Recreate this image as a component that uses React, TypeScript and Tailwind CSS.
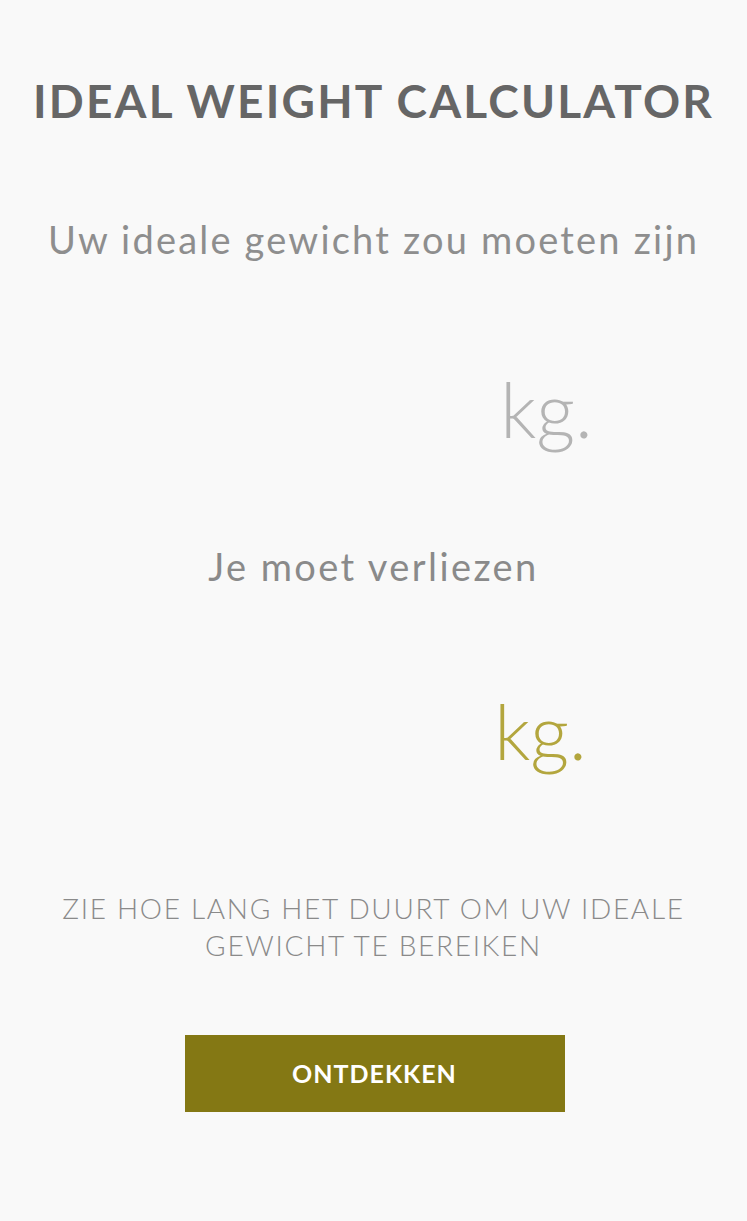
import React from "react";

export default function App() {
  return (
    <div
      className="min-h-[1221px] w-full bg-[#f9f9f9] flex flex-col items-center"
      style={{ fontFamily: "Lato, 'Noto Sans', sans-serif" }}
    >
      <h1 className="mt-[78px] text-[46px] leading-[46px] font-bold tracking-[2.2px] text-[#666666]">
        IDEAL WEIGHT CALCULATOR
      </h1>
      <p className="mt-[92px] text-[38px] leading-[46px] font-normal tracking-[2.2px] text-[#8e8e8e]">
        Uw ideale gewicht zou moeten zijn
      </p>
      <div className="mt-[107px] flex w-full justify-center pl-[346px]">
        <span className="text-[76px] leading-[80px] font-light text-[#b4b4b4]">kg.</span>
      </div>
      <p className="mt-[94px] text-[38px] leading-[46px] font-normal tracking-[2.4px] text-[#8a8a8a]">
        Je moet verliezen
      </p>
      <div className="mt-[102px] flex w-full justify-center pl-[334px]">
        <span className="text-[76px] leading-[80px] font-light text-[#b3a63e]">kg.</span>
      </div>
      <p className="mt-[119px] px-[40px] text-center text-[28px] leading-[37px] font-light tracking-[1.7px] text-[#8a8a8a]">
        ZIE HOE LANG HET DUURT OM UW IDEALE GEWICHT TE BEREIKEN
      </p>
      <button className="mt-[71px] ml-[2px] w-[380px] h-[77px] bg-[#847814] text-white text-[25px] font-bold tracking-[1px]">
        ONTDEKKEN
      </button>
    </div>
  );
}
